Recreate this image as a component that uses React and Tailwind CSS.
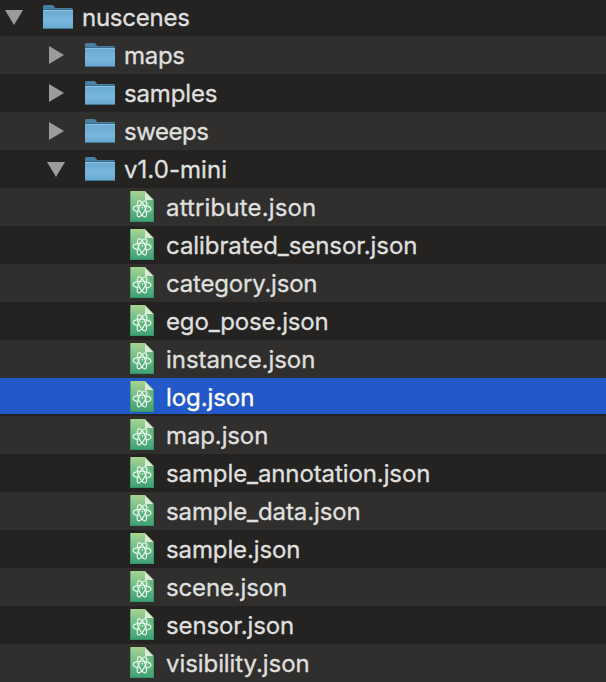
const rows = [
  { name: 'nuscenes', kind: 'folder', depth: 0, open: true, tracking: 'tracking-[-0.25px]' },
  { name: 'maps', kind: 'folder', depth: 1, tracking: 'tracking-[-0.3px]' },
  { name: 'samples', kind: 'folder', depth: 1, tracking: 'tracking-[-0.15px]' },
  { name: 'sweeps', kind: 'folder', depth: 1, tracking: 'tracking-[-0.45px]' },
  { name: 'v1.0-mini', kind: 'folder', depth: 1, open: true, tracking: 'tracking-[0.05px]' },
  { name: 'attribute.json', tracking: 'tracking-[0.15px]' },
  { name: 'calibrated_sensor.json', tracking: 'tracking-[-0.07px]' },
  { name: 'category.json', tracking: 'tracking-[-0.2px]' },
  { name: 'ego_pose.json', tracking: 'tracking-[-0.15px]' },
  { name: 'instance.json', tracking: 'tracking-[-0.05px]' },
  { name: 'log.json', selected: true, tracking: 'tracking-[-0.08px]' },
  { name: 'map.json', tracking: 'tracking-[-0.12px]' },
  { name: 'sample_annotation.json', tracking: 'tracking-[-0.1px]' },
  { name: 'sample_data.json', tracking: 'tracking-[-0.1px]' },
  { name: 'sample.json', tracking: 'tracking-[-0.12px]' },
  { name: 'scene.json', tracking: 'tracking-[-0.15px]' },
  { name: 'sensor.json', tracking: 'tracking-[-0.12px]' },
  { name: 'visibility.json', tracking: 'tracking-[-0.07px]' },
];

function Disclosure({ open }) {
  return (
    <svg className="h-[38px] w-7 shrink-0" viewBox="0 0 28 38" fill="#9b9b9a">
      {open ? <path d="M5 12H23L14 27Z" /> : <path d="M7 10V28L22 19Z" />}
    </svg>
  );
}

function FolderIcon() {
  return (
    <svg className="ml-[15px] mr-[9px] h-[38px] w-[30px] shrink-0" viewBox="0 0 30 38">
      <path d="M0 13V8.5Q0 7 1.5 7H9Q10.2 7 11 8.3L12.2 10H28.5Q30 10 30 11.5V14H0Z" fill="#4a7f9f" />
      <path d="M0 12H30V29.4Q30 31 28.5 31H1.5Q0 31 0 29.4Z" fill="url(#folder)" />
      <path d="M0 11.5H30" stroke="#3b6b88" strokeWidth="1" />
      <path d="M.5 12.5H29.5" stroke="#8bc3e2" strokeWidth="1" />
      <path d="M.8 30.5H29.2" stroke="#447798" strokeWidth="1" />
    </svg>
  );
}

function FileIcon() {
  return (
    <svg className="mr-3 h-[38px] w-6 shrink-0" viewBox="0 0 24 38">
      <path d="M0 3H15L24 12V34H0Z" fill="url(#file)" />
      <path d="M.5 3V33.5H23.5V12" fill="none" stroke="#2f8863" strokeOpacity=".6" />
      <path d="M15 12H24V19Z" fill="#2f7c5c" fillOpacity=".22" />
      <path d="M15 4L23 12H15Z" fill="#dcebd8" />
      <g fill="none" stroke="#e9faee" strokeWidth="1.15">
        <path d="M8.6 23.8C5 23.2 3 22 3.1 20.3C3.3 18.2 7.6 17 12.6 17.3C17.6 17.6 21.2 19.2 21 21.2C20.8 22.8 18.6 23.8 15.4 24" />
        <ellipse cx="12" cy="20.8" rx="8.8" ry="3.3" transform="rotate(67 12 20.8)" />
        <ellipse cx="12" cy="20.8" rx="8.8" ry="3.3" transform="rotate(116 12 20.8)" />
      </g>
      <circle cx="12.4" cy="19.8" r=".8" fill="#e9faee" />
    </svg>
  );
}

function Row({ row, index }) {
  const tone = row.selected
    ? 'border-b-2 border-[#242322] bg-[#2258c8] text-white'
    : index % 2
      ? 'bg-[#302f2e] text-[#dfdfde]'
      : 'bg-[#242322] text-[#dfdfde]';
  const indent = row.kind ? (row.depth ? 'pl-[42px]' : '') : 'pl-[130px]';
  return (
    <li className={`flex h-[38px] shrink-0 items-start ${tone} ${indent}`}>
      {row.kind ? (
        <>
          <Disclosure open={row.open} />
          <FolderIcon />
        </>
      ) : (
        <FileIcon />
      )}
      <span
        className={`whitespace-pre text-[24px] leading-[40px] [-webkit-text-stroke:0.35px_currentColor] ${row.tracking}`}
      >
        {row.name}
      </span>
    </li>
  );
}

export default function App() {
  return (
    <div className="h-[682px] w-[606px] overflow-hidden bg-[#242322] font-['Inter',sans-serif]">
      <svg className="absolute h-0 w-0" aria-hidden="true">
        <defs>
          <linearGradient id="folder" x1="0" y1="0" x2="0" y2="1">
            <stop offset="0" stopColor="#69aad2" />
            <stop offset=".6" stopColor="#78b7db" />
            <stop offset="1" stopColor="#66a6ce" />
          </linearGradient>
          <linearGradient id="file" x1="0" y1="0" x2="0" y2="1">
            <stop offset="0" stopColor="#a9d393" />
            <stop offset=".5" stopColor="#6dba86" />
            <stop offset="1" stopColor="#3f9f75" />
          </linearGradient>
        </defs>
      </svg>
      <ul className="-mt-0.5 flex flex-col">
        {rows.map((row, index) => (
          <Row key={row.name} row={row} index={index} />
        ))}
      </ul>
    </div>
  );
}
